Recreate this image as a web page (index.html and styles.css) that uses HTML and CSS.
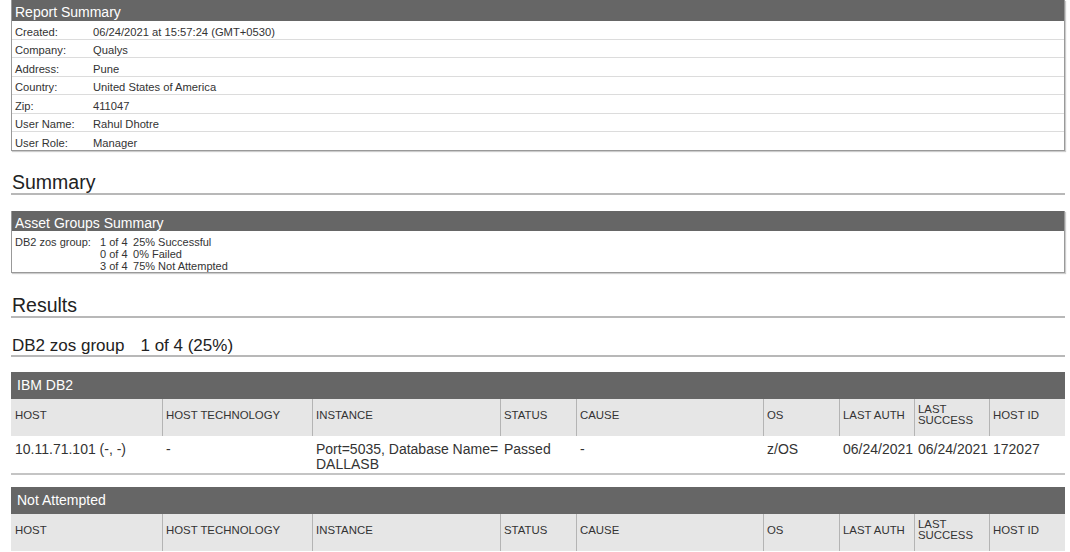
FILE: index.html
```html
<!DOCTYPE html>
<html lang="en">
<head>
<meta charset="utf-8">
<title>Report Summary</title>
<link rel="stylesheet" href="styles.css">
</head>
<body>
<div class="page">
  <section class="box report">
    <div class="box-title report-title">Report Summary</div>
    <div class="kv-row"><span class="kv-label">Created:</span><span class="kv-value">06/24/2021 at 15:57:24 (GMT+0530)</span></div>
    <div class="kv-row"><span class="kv-label">Company:</span><span class="kv-value">Qualys</span></div>
    <div class="kv-row"><span class="kv-label">Address:</span><span class="kv-value">Pune</span></div>
    <div class="kv-row"><span class="kv-label">Country:</span><span class="kv-value">United States of America</span></div>
    <div class="kv-row"><span class="kv-label">Zip:</span><span class="kv-value">411047</span></div>
    <div class="kv-row"><span class="kv-label">User Name:</span><span class="kv-value">Rahul Dhotre</span></div>
    <div class="kv-row"><span class="kv-label">User Role:</span><span class="kv-value">Manager</span></div>
  </section>

  <h2 class="heading heading-summary">Summary</h2>

  <section class="box asset">
    <div class="box-title asset-title">Asset Groups Summary</div>
    <div class="asset-body">
      <span class="asset-label">DB2 zos group:</span>
      <span class="asset-count">1 of 4</span><span class="asset-pct">25% Successful</span>
      <span class="asset-label"></span>
      <span class="asset-count">0 of 4</span><span class="asset-pct">0% Failed</span>
      <span class="asset-label"></span>
      <span class="asset-count">3 of 4</span><span class="asset-pct">75% Not Attempted</span>
    </div>
  </section>

  <h2 class="heading heading-results">Results</h2>

  <h3 class="group-heading">DB2 zos group<span class="group-count">1 of 4 (25%)</span></h3>

  <table class="results">
    <colgroup>
      <col class="c-host"><col class="c-tech"><col class="c-inst"><col class="c-status"><col class="c-cause"><col class="c-os"><col class="c-auth"><col class="c-succ"><col class="c-id">
    </colgroup>
    <thead>
      <tr><th colspan="9" class="table-title">IBM DB2</th></tr>
      <tr class="col-head">
        <th>HOST</th><th>HOST TECHNOLOGY</th><th>INSTANCE</th><th>STATUS</th><th>CAUSE</th><th>OS</th><th>LAST AUTH</th><th>LAST SUCCESS</th><th>HOST ID</th>
      </tr>
    </thead>
    <tbody>
      <tr class="data-row">
        <td>10.11.71.101 (-, -)</td><td>-</td><td>Port=5035, Database Name= DALLASB</td><td>Passed</td><td>-</td><td>z/OS</td><td>06/24/2021</td><td>06/24/2021</td><td>172027</td>
      </tr>
    </tbody>
  </table>

  <table class="results results-second">
    <colgroup>
      <col class="c-host"><col class="c-tech"><col class="c-inst"><col class="c-status"><col class="c-cause"><col class="c-os"><col class="c-auth"><col class="c-succ"><col class="c-id">
    </colgroup>
    <thead>
      <tr><th colspan="9" class="table-title">Not Attempted</th></tr>
      <tr class="col-head">
        <th>HOST</th><th>HOST TECHNOLOGY</th><th>INSTANCE</th><th>STATUS</th><th>CAUSE</th><th>OS</th><th>LAST AUTH</th><th>LAST SUCCESS</th><th>HOST ID</th>
      </tr>
    </thead>
  </table>
</div>
</body>
</html>
```
FILE: styles.css
```css
html, body {
  margin: 0;
  padding: 0;
  background: #fff;
}

body {
  font-family: "Liberation Sans", Arial, sans-serif;
  color: #333;
}

.page {
  padding: 0 5px 0 11px;
}

/* Boxes */
.box {
  border: 1px solid #999;
  border-top: 0;
  box-shadow: 1px 1px 1px rgba(0, 0, 0, 0.2);
  background: #fff;
}

.box-title {
  background: #666;
  color: #fff;
  font-size: 14px;
  padding-left: 3px;
}

.report-title {
  height: 21px;
  padding-top: 3.5px;
  line-height: 17.5px;
  box-sizing: border-box;
}

.asset-title {
  height: 20px;
  padding-top: 4px;
  line-height: 16px;
  box-sizing: border-box;
}

/* Report summary key/value rows */
.kv-row {
  display: flex;
  font-size: 11.2px;
  line-height: 13px;
  padding: 4.5px 0 0 3px;
  height: 18.5px;
  box-sizing: border-box;
  border-bottom: 1px solid #dcdcdc;
  color: #333;
}

.kv-row:last-child {
  border-bottom: 0;
  height: 17.5px;
}

.kv-label {
  width: 78px;
  flex: none;
}

/* Headings */
.heading {
  margin: 0;
  font-weight: normal;
  font-size: 19.5px;
  line-height: 22px;
  color: #222;
  padding-left: 1px;
  border-bottom: 2px solid #b8b8b8;
}

.heading-summary {
  margin-top: 20px;
}

.heading-results {
  margin-top: 21px;
}

.group-heading {
  margin: 18px 0 0;
  font-weight: normal;
  font-size: 17px;
  line-height: 19px;
  color: #222;
  padding-left: 1px;
  border-bottom: 2px solid #b8b8b8;
}

.group-count {
  margin-left: 16px;
}

/* Asset groups summary */
.asset {
  margin-top: 16.5px;
}

.asset-body {
  display: grid;
  grid-template-columns: 85px max-content 1fr;
  font-size: 11px;
  line-height: 12px;
  padding: 5px 3px 0 3px;
  height: 41px;
  box-sizing: border-box;
  color: #333;
}

.asset-count {
  padding-right: 5.5px;
}

/* Result tables */
.results {
  width: 100%;
  table-layout: fixed;
  border-collapse: separate;
  border-spacing: 0;
  margin-top: 15px;
}

.results-second {
  margin-top: 12px;
}

.c-host { width: 151px; }
.c-tech { width: 150px; }
.c-inst { width: 188px; }
.c-status { width: 76px; }
.c-cause { width: 187px; }
.c-os { width: 76px; }
.c-auth { width: 75px; }
.c-succ { width: 75px; }
.c-id { width: 76px; }

.table-title {
  background: #666;
  color: #fff;
  font-weight: normal;
  font-size: 14px;
  text-align: left;
  height: 27px;
  line-height: 27px;
  padding: 0 0 0 6px;
}

.col-head th {
  background: #e6e6e6;
  font-weight: normal;
  font-size: 11.4px;
  line-height: 11px;
  text-align: left;
  vertical-align: middle;
  height: 37px;
  box-sizing: border-box;
  padding: 0 2px 5px 3px;
  border-left: 1px solid #b4b4b4;
  color: #333;
}

.col-head th:first-child {
  border-left: 0;
  padding-left: 4px;
}

.data-row td {
  font-size: 14px;
  line-height: 15px;
  vertical-align: top;
  padding: 6px 1px 1px 4px;
  height: 38px;
  box-sizing: border-box;
  border-bottom: 2px solid #c4c4c4;
  color: #333;
}
```
